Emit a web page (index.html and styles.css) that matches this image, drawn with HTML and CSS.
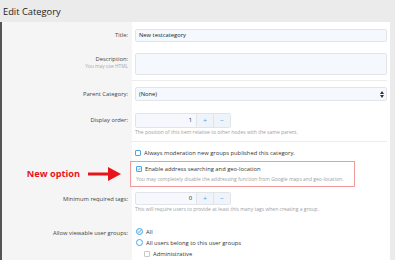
FILE: index.html
```html
<!DOCTYPE html>
<html lang="en">

<head>
    <meta charset="UTF-8">
    <title>Edit Category</title>
    <link rel="stylesheet" href="styles.css">
</head>

<body>
    <h1 class="page-title">Edit Category</h1>

    <div class="panel">
        <div class="row row--title">
            <div class="row__label">Title:</div>
            <div class="row__field">
                <div class="input">New testcategory</div>
            </div>
        </div>

        <div class="row row--desc">
            <div class="row__label">
                Description:
                <span class="row__sublabel">You may use HTML</span>
            </div>
            <div class="row__field">
                <div class="input input--area"></div>
            </div>
        </div>

        <div class="row row--parent">
            <div class="row__label">Parent Category:</div>
            <div class="row__field">
                <div class="input input--select">
                    (None)
                    <svg class="select-arrow" width="4" height="7" viewBox="0 0 4 7">
                        <path d="M0 3 L2 0 L4 3 Z M0 4 L2 7 L4 4 Z" fill="#333" />
                    </svg>
                </div>
            </div>
        </div>

        <div class="row row--order">
            <div class="row__label">Display order:</div>
            <div class="row__field">
                <div class="spinner">
                    <div class="spinner__value">1</div>
                    <div class="spinner__btn">+</div>
                    <div class="spinner__btn">&minus;</div>
                </div>
                <p class="hint">The position of this item relative to other nodes with the same parent.</p>
            </div>
        </div>

        <div class="row row--moderate">
            <div class="row__label"></div>
            <div class="row__field">
                <div class="check"><span class="box"></span>Always moderation new groups published this category.</div>
            </div>
        </div>

        <div class="row row--geo">
            <div class="row__label">
                <span class="callout">New option</span>
                <svg class="callout-arrow" width="34" height="16" viewBox="0 0 34 16">
                    <rect x="0" y="6.5" width="22" height="3" fill="#e8141b" />
                    <path d="M20 1 L33 8 L20 15 Z" fill="#e8141b" />
                </svg>
            </div>
            <div class="row__field">
                <div class="new-option">
                    <div class="check"><span class="box box--checked"><svg width="6" height="6" viewBox="0 0 6 6"><path d="M1 3 L2.5 4.5 L5 1.5" fill="none" stroke="#47a7eb" stroke-width="1" /></svg></span>Enable address searching and geo-location</div>
                    <p class="hint hint--inset">You may completely disable the addressing function from Google maps and geo-location.</p>
                </div>
            </div>
        </div>

        <div class="row row--tags">
            <div class="row__label">Minimum required tags:</div>
            <div class="row__field">
                <div class="spinner">
                    <div class="spinner__value">0</div>
                    <div class="spinner__btn">+</div>
                    <div class="spinner__btn">&minus;</div>
                </div>
                <p class="hint">This will require users to provide at least this many tags when creating a group.</p>
            </div>
        </div>

        <div class="row row--groups">
            <div class="row__label">Allow viewable user groups:</div>
            <div class="row__field">
                <div class="check"><span class="radio radio--checked"><svg width="5" height="5" viewBox="0 0 5 5"><path d="M1 2.5 L2 3.5 L4 1.2" fill="none" stroke="#47a7eb" stroke-width="0.9" /></svg></span>All</div>
                <div class="check"><span class="radio"></span>All users belong to this user groups</div>
                <div class="check check--nested"><span class="box box--plain"></span>Administrative</div>
                <div class="check check--nested"><span class="box box--plain"></span></div>
            </div>
        </div>
    </div>
</body>

</html>
```

FILE: styles.css
```css
* {
    margin: 0;
    padding: 0;
    box-sizing: border-box;
}

body {
    background: #ebebeb;
    font-family: 'Open Sans', 'Noto Sans', sans-serif;
    color: #333;
    overflow: hidden;
}

.page-title {
    height: 22px;
    padding-left: 3px;
    font-size: 9.3px;
    font-weight: 400;
    line-height: 24px;
    color: #222;
}

.panel {
    width: 390px;
    border-left: 2px solid #555;
    background: #fff;
}

.row {
    display: flex;
}

.row__label {
    width: 130px;
    flex-shrink: 0;
    background: #f5f5f5;
    padding-right: 4px;
    text-align: right;
    font-size: 5.8px;
    color: #444;
}

.row__sublabel {
    display: block;
    font-size: 4.8px;
    color: #aaa;
}

.row__field {
    flex: 1;
    padding: 0 3px 0 3px;
}

.input {
    height: 13px;
    background: #f5f9fd;
    border: 1px solid #e1e5ea;
    border-radius: 2px;
    padding-left: 3px;
    font-size: 5.8px;
    line-height: 11px;
    color: #222;
}

.input--area {
    height: 22px;
}

.input--select {
    height: 14px;
    line-height: 12px;
    position: relative;
}

.select-arrow {
    position: absolute;
    right: 2px;
    top: 3px;
}

/* rows */
.row--title .row__label,
.row--title .row__field {
    padding-top: 7px;
    height: 31px;
}

.row--title .row__label {
    line-height: 13px;
}

.row--desc .row__label,
.row--desc .row__field {
    height: 28px;
}

.row--desc .row__label {
    padding-top: 3px;
    line-height: 7px;
}

.row--desc .row__field {
    border-bottom: 1px solid #ececec;
    margin-right: 3px;
    padding-right: 0;
}

.row--parent .row__label,
.row--parent .row__field {
    padding-top: 6px;
    height: 26px;
}

.row--parent .row__label {
    line-height: 14px;
}

.row--order .row__label,
.row--order .row__field {
    height: 35px;
    padding-top: 6px;
}

.row--order .row__label {
    line-height: 15px;
}

.row--order .row__field {
    border-bottom: 1px solid #ececec;
    margin-right: 3px;
    padding-right: 0;
}

.spinner {
    display: flex;
    width: 96px;
    height: 15px;
    border: 1px solid #e1e5ea;
    border-radius: 2px;
    background: #f5f9fd;
    font-size: 5.8px;
    line-height: 13px;
}

.spinner__value {
    flex: 1;
    text-align: right;
    padding-right: 4px;
    color: #222;
}

.spinner__btn {
    width: 17px;
    text-align: center;
    border-left: 1px solid #e1e5ea;
    background: #eef4fa;
    color: #47a7eb;
    font-size: 7px;
}

.hint {
    font-size: 5px;
    line-height: 7px;
    margin-top: 1px;
    color: #a0a0a0;
}

.check {
    display: flex;
    align-items: center;
    height: 10px;
    font-size: 5.8px;
    color: #333;
}

.box,
.radio {
    width: 6px;
    height: 6px;
    margin-right: 3px;
    border: 1px solid #47a7eb;
    border-radius: 1px;
    background: #fff;
    display: flex;
    align-items: center;
    justify-content: center;
    flex-shrink: 0;
}

.box--checked {
    background: #eaf3fb;
}

.box--plain {
    border-color: #c8c8c8;
}

.radio {
    width: 7px;
    height: 7px;
    border-radius: 50%;
}

.radio--checked {
    background: #eaf3fb;
}

.row--moderate .row__label,
.row--moderate .row__field {
    height: 19px;
}

.row--moderate .row__field {
    padding-top: 6px;
}

.row--geo .row__label,
.row--geo .row__field {
    height: 29px;
}

.row--geo .row__label {
    display: flex;
    align-items: center;
    justify-content: flex-end;
    padding-right: 10px;
    padding-bottom: 4px;
}

.callout {
    font-size: 9.2px;
    font-weight: 700;
    color: #e8141b;
    margin-right: 8px;
}

.row--geo .row__field {
    padding-left: 0;
    margin-left: -2px;
}

.new-option {
    width: 225px;
    height: 26px;
    border: 1px solid #f29b9b;
    padding: 2px 0 0 5px;
}

.hint--inset {
    margin-top: 0;
    line-height: 10px;
}

.row--tags .row__label,
.row--tags .row__field {
    height: 32px;
}

.row--tags .row__label {
    line-height: 15px;
    padding-top: 2px;
}

.row--tags .row__field {
    padding-top: 2px;
}

.row--tags .spinner {
    height: 13px;
    line-height: 11px;
}

.row--groups .row__label,
.row--groups .row__field {
    height: 60px;
}

.row--groups .row__label {
    padding-top: 5px;
    line-height: 12px;
}

.row--groups .row__field {
    padding-top: 4px;
    padding-left: 4px;
}

.row--groups .check {
    height: 11px;
}

.check--nested {
    padding-left: 8px;
}
```
